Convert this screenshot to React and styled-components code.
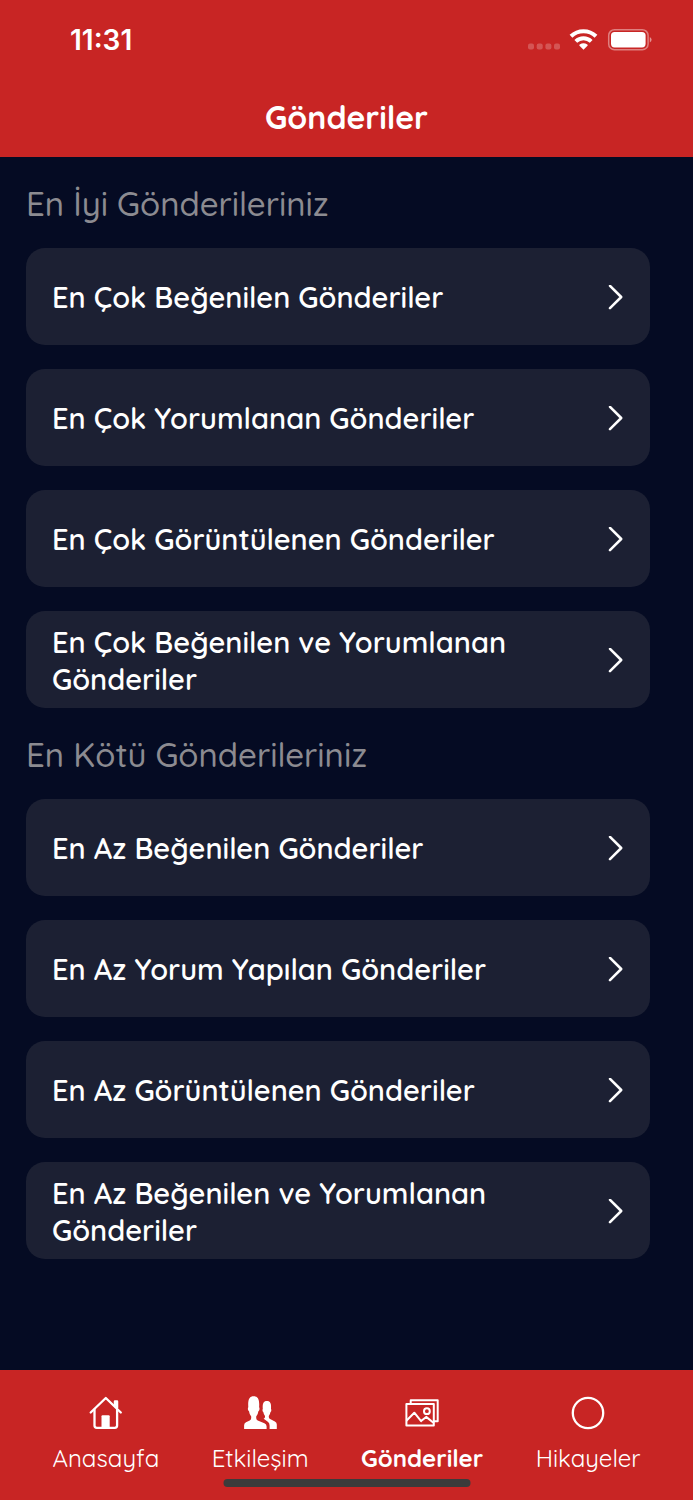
import React from "react";
import styled, { createGlobalStyle } from "styled-components";

const COLORS = {
  red: "#c82524",
  navy: "#050b23",
  card: "#1c2033",
  grey: "#8c8b91",
  white: "#ffffff",
  bar: "#3b3b3b",
};

const GlobalStyle = createGlobalStyle`
  * {
    box-sizing: border-box;
  }
  body {
    margin: 0;
    background-color: ${COLORS.navy};
    font-family: Quicksand, Lato, "Noto Sans", sans-serif;
  }
  h1, h2, ul {
    margin: 0;
    padding: 0;
  }
`;

const Screen = styled.div`
  display: flex;
  flex-direction: column;
  min-height: 100vh;
`;

const Header = styled.header`
  background-color: ${COLORS.red};
  color: ${COLORS.white};
`;

const StatusBar = styled.div`
  display: flex;
  align-items: center;
  justify-content: space-between;
  height: 79px;
  padding-left: 70px;
  padding-right: 41px;
`;

const Time = styled.time`
  font-family: Inter, "Liberation Sans", sans-serif;
  font-size: 28px;
  font-weight: 600;
`;

const StatusIcons = styled.div`
  display: flex;
  align-items: center;
`;

const Title = styled.h1`
  padding-bottom: 2px;
  line-height: 76px;
  font-size: 32px;
  font-weight: 700;
  text-align: center;
`;

const Content = styled.main`
  flex: 1;
  padding-left: 26px;
  padding-right: 43px;
`;

const SectionTitle = styled.h2`
  padding-top: 25px;
  padding-bottom: 22px;
  line-height: 44px;
  font-size: 33px;
  font-weight: 500;
  color: ${COLORS.grey};
`;

const List = styled.ul`
  display: flex;
  flex-direction: column;
  gap: 24px;
  list-style: none;
`;

const Card = styled.button`
  display: flex;
  align-items: center;
  justify-content: space-between;
  width: 100%;
  min-height: 97px;
  padding: 12px 26px 10px;
  border: 0;
  border-radius: 19px;
  background-color: ${COLORS.card};
  color: ${COLORS.white};
  font-family: inherit;
  font-size: 29px;
  font-weight: 600;
  line-height: 37px;
  text-align: left;
  cursor: pointer;
  span {
    max-width: 480px;
  }
  svg {
    flex-shrink: 0;
  }
`;

const TabBar = styled.nav`
  position: relative;
  display: flex;
  justify-content: space-evenly;
  height: 130px;
  padding-top: 24px;
  background-color: ${COLORS.red};
`;

const Tab = styled.a`
  display: flex;
  flex-direction: column;
  align-items: center;
  gap: 11px;
  color: ${COLORS.white};
  font-size: 24px;
  font-weight: ${(props) => (props.$active ? 700 : 400)};
  line-height: 30px;
  text-decoration: none;
`;

const HomeIndicator = styled.div`
  position: absolute;
  bottom: 13px;
  left: 50%;
  width: 247px;
  height: 8px;
  border-radius: 4px;
  transform: translateX(-50%);
  background-color: ${COLORS.bar};
`;

const SignalIcon = () => (
  <svg width="34" height="28" viewBox="0 0 34 28" fill="#fff" opacity="0.22">
    <rect x="0" y="17.5" width="6" height="6" rx="2" />
    <rect x="8.7" y="17.5" width="6" height="6" rx="2" />
    <rect x="17.4" y="17.5" width="6" height="6" rx="2" />
    <rect x="26" y="17.5" width="6" height="6" rx="2" />
  </svg>
);

const WifiIcon = () => (
  <svg width="44" height="28" viewBox="0 0 44 28">
    <g fill="none" stroke="#fff" strokeWidth="4">
      <path d="M9 10.2a18 18 0 0 1 25 0" />
      <path d="M13.8 15.4a11.2 11.2 0 0 1 15.4 0" />
    </g>
    <path
      d="M21.5 23.7l-4-4q-.5-.7.2-1.200 3.800-2.500 7.600 0 .7.500.2 1.200z"
      fill="#fff"
    />
  </svg>
);

const BatteryIcon = () => (
  <svg width="46" height="28" viewBox="0 0 46 28">
    <rect
      x="2.7"
      y="3.7"
      width="39.4"
      height="20"
      rx="5.8"
      fill="none"
      stroke="#fff"
      strokeOpacity="0.42"
      strokeWidth="1.5"
    />
    <rect x="5" y="6" width="34.6" height="15.4" rx="3.6" fill="#fff" />
    <path d="M43.8 11q1.8 1 1.8 2.8t-1.8 2.8z" fill="#fff" fillOpacity="0.5" />
  </svg>
);

const ChevronIcon = () => (
  <svg width="16" height="26" viewBox="0 0 16 26">
    <path
      d="M2 0.8L13.2 12L2 23.2"
      fill="none"
      stroke="#fff"
      strokeWidth="2.5"
      strokeLinecap="round"
      strokeLinejoin="round"
    />
  </svg>
);

const HomeIcon = () => (
  <svg width="38" height="38" viewBox="0 0 38 38">
    <g
      fill="none"
      stroke="#fff"
      strokeWidth="2.3"
      strokeLinecap="round"
      strokeLinejoin="round"
    >
      <path d="M3.7 18.5L18.8 4l15 14.5" />
      <path d="M7.5 15.6v16q0 2.3 2.3 2.3h18q2.3 0 2.3-2.3v-16" />
      <path d="M27.9 11.5V7.4h2.2v6.4" />
    </g>
    <path d="M14.5 33.8V22.2q0-1 1-1h6.2q1 0 1 1v11.6z" fill="#fff" />
  </svg>
);

const PeopleIcon = () => (
  <svg width="38" height="38" viewBox="0 0 38 38" fill="#fff">
    <path d="M3.1 35v-3.8q0-2.1 1.900-3l3.700-1.700q1.500-.8 1.500-2.600v-1.400q-1.800-2-2.200-5.200-.9-.4-1.100-2-.1-1.600.4-2.100C6.700 5.500 8.300 2.200 12.700 2.200s6 3.300 5.400 11q.5.500.4 2.100-.2 1.600-1.100 2-.4 3.200-2.200 5.200v1.400q0 1.800 1.500 2.600l6.700 2.700q2.200 1 2.200 3V35z" />
    <path d="M28.600 35v-3.200q0-2.700-1.500-3.900l-3-2.200-1.500-.9q1.400-.7 1.400-1.900v-1q-1.300-1.500-1.700-3.900-.7-.3-.8-1.500-.1-1.200.3-1.600C21.400 9.600 22.500 7.100 25.900 7.100s4.500 2.500 4.100 7.800q.4.400.3 1.600-.1 1.200-.8 1.500-.4 2.400-1.700 3.900v1q0 1.400 1.300 2l4.800 2.500q1.900 1 1.900 3.200V35z" />
  </svg>
);

const PhotosIcon = () => (
  <svg width="38" height="38" viewBox="0 0 38 38">
    <g fill="none" stroke="#fff" strokeWidth="2" strokeLinejoin="round">
      <path d="M7.7 9.8V6.2h27v21h-3.7" />
      <rect x="3.4" y="10" width="27.4" height="21.4" />
      <path d="M3.4 26.7l7.9-8 6.8 8.4 5.1-4.2 7.6 6.1" />
      <circle cx="23.9" cy="17.2" r="2.9" />
    </g>
  </svg>
);

const CircleIcon = () => (
  <svg width="38" height="38" viewBox="0 0 38 38">
    <circle
      cx="19"
      cy="19"
      r="15.2"
      fill="none"
      stroke="#fff"
      strokeWidth="2.3"
    />
  </svg>
);

const SECTIONS = [
  {
    title: "En İyi Gönderileriniz",
    items: [
      "En Çok Beğenilen Gönderiler",
      "En Çok Yorumlanan Gönderiler",
      "En Çok Görüntülenen Gönderiler",
      "En Çok Beğenilen ve Yorumlanan Gönderiler",
    ],
  },
  {
    title: "En Kötü Gönderileriniz",
    items: [
      "En Az Beğenilen Gönderiler",
      "En Az Yorum Yapılan Gönderiler",
      "En Az Görüntülenen Gönderiler",
      "En Az Beğenilen ve Yorumlanan Gönderiler",
    ],
  },
];

const TABS = [
  { label: "Anasayfa", href: "#anasayfa", Icon: HomeIcon },
  { label: "Etkileşim", href: "#etkilesim", Icon: PeopleIcon },
  { label: "Gönderiler", href: "#gonderiler", Icon: PhotosIcon, active: true },
  { label: "Hikayeler", href: "#hikayeler", Icon: CircleIcon },
];

const App = () => {
  return (
    <Screen lang="tr">
      <GlobalStyle />
      <Header>
        <StatusBar>
          <Time>11:31</Time>
          <StatusIcons>
            <SignalIcon />
            <WifiIcon />
            <BatteryIcon />
          </StatusIcons>
        </StatusBar>
        <Title>Gönderiler</Title>
      </Header>

      <Content>
        {SECTIONS.map((section) => (
          <section key={section.title}>
            <SectionTitle>{section.title}</SectionTitle>
            <List>
              {section.items.map((item) => (
                <li key={item}>
                  <Card type="button">
                    <span>{item}</span>
                    <ChevronIcon />
                  </Card>
                </li>
              ))}
            </List>
          </section>
        ))}
      </Content>

      <TabBar>
        {TABS.map(({ label, href, Icon, active }) => (
          <Tab
            key={label}
            href={href}
            $active={active}
            aria-current={active ? "page" : undefined}
          >
            <Icon />
            {label}
          </Tab>
        ))}
        <HomeIndicator />
      </TabBar>
    </Screen>
  );
};

export default App;
